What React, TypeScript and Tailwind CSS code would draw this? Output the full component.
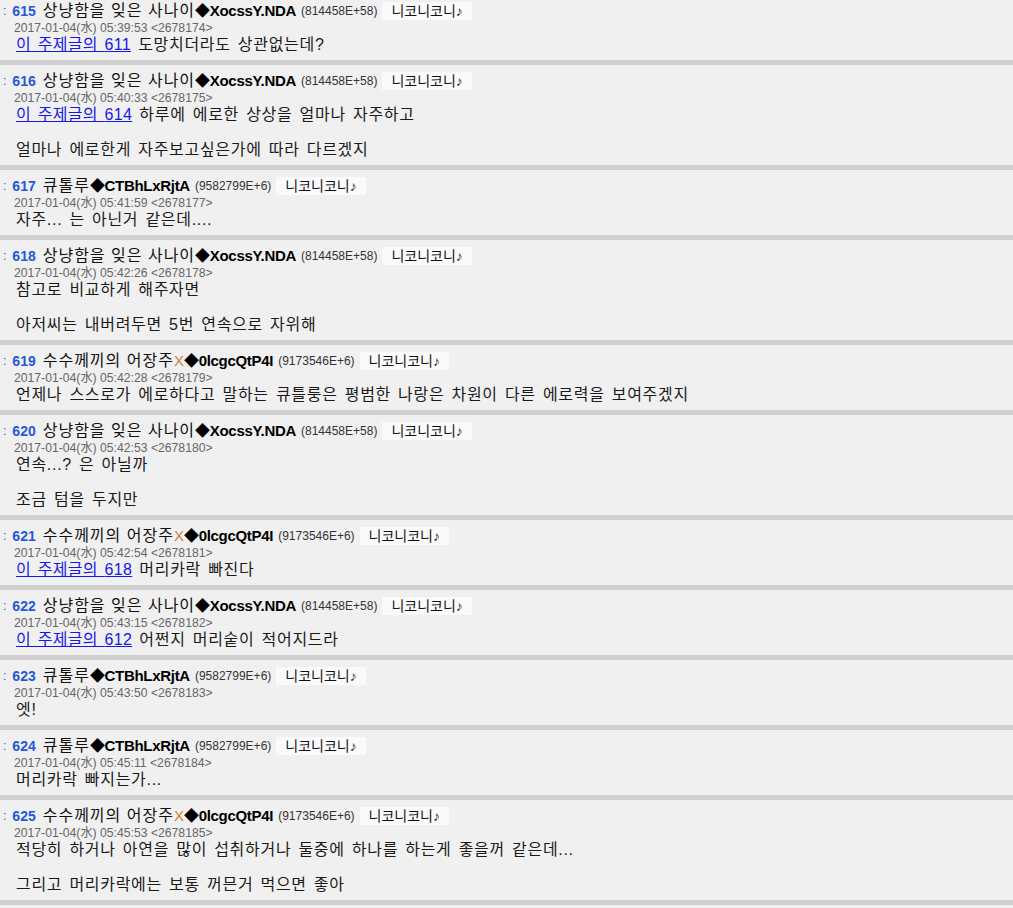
import React from "react";

type Post = {
  no: number;
  author: "sang" | "cthulhu" | "riddle";
  time: string;
  id: number;
  anchor?: number;
  lines: string[];
};

const authors = {
  sang: { name: "상냥함을 잊은 사나이", mark: "", trip: "XocssY.NDA", score: "(814458E+58)" },
  cthulhu: { name: "큐톨루", mark: "", trip: "CTBhLxRjtA", score: "(9582799E+6)" },
  riddle: { name: "수수께끼의 어장주", mark: "X", trip: "0lcgcQtP4I", score: "(9173546E+6)" },
};

const posts: Post[] = [
  { no: 615, author: "sang", time: "05:39:53", id: 2678174, anchor: 611, lines: ["도망치더라도 상관없는데?"] },
  {
    no: 616,
    author: "sang",
    time: "05:40:33",
    id: 2678175,
    anchor: 614,
    lines: ["하루에 에로한 상상을 얼마나 자주하고", "", "얼마나 에로한게 자주보고싶은가에 따라 다르겠지"],
  },
  { no: 617, author: "cthulhu", time: "05:41:59", id: 2678177, lines: ["자주... 는 아닌거 같은데...."] },
  {
    no: 618,
    author: "sang",
    time: "05:42:26",
    id: 2678178,
    lines: ["참고로 비교하게 해주자면", "", "아저씨는 내버려두면 5번 연속으로 자위해"],
  },
  {
    no: 619,
    author: "riddle",
    time: "05:42:28",
    id: 2678179,
    lines: ["언제나 스스로가 에로하다고 말하는 큐틀룽은 평범한 나랑은 차원이 다른 에로력을 보여주겠지"],
  },
  { no: 620, author: "sang", time: "05:42:53", id: 2678180, lines: ["연속...? 은 아닐까", "", "조금 텀을 두지만"] },
  { no: 621, author: "riddle", time: "05:42:54", id: 2678181, anchor: 618, lines: ["머리카락 빠진다"] },
  { no: 622, author: "sang", time: "05:43:15", id: 2678182, anchor: 612, lines: ["어쩐지 머리숱이 적어지드라"] },
  { no: 623, author: "cthulhu", time: "05:43:50", id: 2678183, lines: ["엣!"] },
  { no: 624, author: "cthulhu", time: "05:45:11", id: 2678184, lines: ["머리카락 빠지는가..."] },
  {
    no: 625,
    author: "riddle",
    time: "05:45:53",
    id: 2678185,
    lines: ["적당히 하거나 아연을 많이 섭취하거나 둘중에 하나를 하는게 좋을꺼 같은데...", "", "그리고 머리카락에는 보통 꺼믄거 먹으면 좋아"],
  },
];

const font = "font-['Liberation_Sans','Noto_Sans_CJK_KR',sans-serif]";

const PostItem = ({ post, first }: { post: Post; first: boolean }) => {
  const a = authors[post.author];
  return (
    <>
      <article className={`${first ? "pt-[2px]" : "pt-[7px]"} pb-[6.5px]`}>
        <header className="flex h-[18px] items-center whitespace-nowrap">
          <span className="pl-[3px] text-[12px] text-[#2558d8]">:</span>
          <span className="ml-[6px] text-[14px] font-bold text-[#2558d8]">{post.no}</span>
          <span className="ml-[7px] text-[16px] tracking-[1px] text-[#111]">{a.name}</span>
          {a.mark && <span className="text-[15px] text-[#c8843e]">{a.mark}</span>}
          <span className="text-[15px] font-bold tracking-[-0.3px] text-black">◆{a.trip}</span>
          <span className="ml-[5px] text-[12px] text-[#333]">{a.score}</span>
          <span className="ml-[5px] flex h-[18px] items-center bg-[#fafafa] px-[9px] text-[14px] text-[#111]">
            니코니코니<span className="text-[#3a2612]">♪</span>
          </span>
        </header>
        <div className="h-[16px] pl-[14px] text-[12.2px] leading-[16px] text-[#666]">
          2017-01-04(水) {post.time} &lt;{post.id}&gt;
        </div>
        <div className="pl-[16px] text-[16px] leading-[17.5px] tracking-[0.7px] text-[#1a1a1a] [word-spacing:2px]">
          {post.lines.map((line, i) => (
            <p key={i} className="h-[17.5px] whitespace-nowrap">
              {i === 0 && post.anchor && (
                <>
                  <a href="#" className="tracking-[0.3px] text-[#1818e6] underline">
                    이 주제글의 {post.anchor}
                  </a>{" "}
                </>
              )}
              {line}
            </p>
          ))}
        </div>
      </article>
      <div className="h-[5px] bg-[#cfcfcf]" />
    </>
  );
};

export default function App() {
  return (
    <main className={`min-h-[908px] w-[1013px] overflow-hidden bg-[#f0f0f0] ${font}`}>
      {posts.map((post, i) => (
        <PostItem key={post.no} post={post} first={i === 0} />
      ))}
    </main>
  );
}
